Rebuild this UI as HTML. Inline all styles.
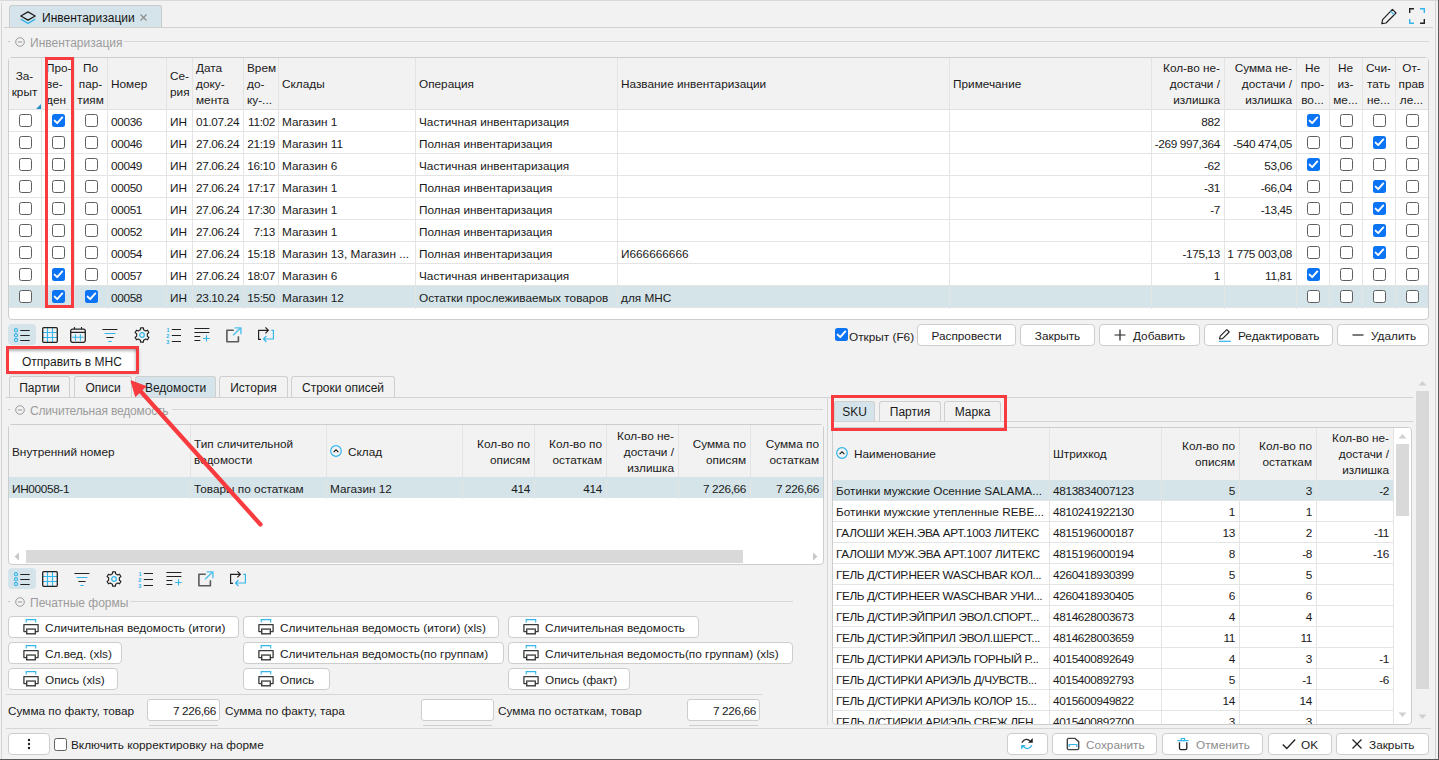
<!DOCTYPE html><html><head><meta charset="utf-8"><style>
*{box-sizing:border-box;margin:0;padding:0}
html,body{width:1439px;height:760px;overflow:hidden;background:#f2f2f2}
body{position:relative;font-family:"Liberation Sans",sans-serif;font-size:11.8px;color:#1a1a1a}
div{position:absolute}
.t{white-space:nowrap;line-height:16px;height:16px}
.n{letter-spacing:-0.35px}
.cb{width:13px;height:13px;border:1.3px solid #5f5f5f;border-radius:2.5px;background:#fff}
.cbc{width:13px;height:13px;border-radius:2.5px;background:#0a74f5}
.btn{background:#fff;border:1px solid #cdcdcd;border-radius:4px}
.hl{height:1px;background:#d6d6d6}
.vl{width:1px;background:#d6d6d6}
.grp{color:#9c9c9c}
svg{position:absolute;overflow:visible}
</style></head><body><div style="left:0px;top:0px;width:1439px;height:1px;background:#d9d9d9"></div>
<div style="left:1px;top:3px;width:1px;height:757px;background:#d4d4d4"></div>
<div style="left:1435px;top:0px;width:1px;height:760px;background:#d4d4d4"></div>
<div style="left:1438px;top:0px;width:1px;height:760px;background:#5a5a5a"></div>
<div style="left:0px;top:759px;width:1439px;height:1px;background:#5a5a5a"></div>
<div style="left:9px;top:5px;width:153px;height:22px;background:#d5e4ea;border:1px solid #c8cccd;border-bottom:none;border-radius:3px 3px 0 0"></div>
<svg style="left:20px;top:10.5px" width="16" height="14" viewBox="0 0 16 14"><path d="M8 0.9 L15.2 5 L8 9.1 L0.8 5 Z" fill="none" stroke="#1e1e1e" stroke-width="1.3" stroke-linejoin="round"/><path d="M1.2 8.4 L8 12.4 L14.8 8.4" fill="none" stroke="#33b5ea" stroke-width="1.3" stroke-linejoin="round" stroke-linecap="round"/></svg>
<div class="t" style="left:42px;top:10px;font-size:12px;color:#141414">Инвентаризации</div>
<svg style="left:139.5px;top:14px" width="7" height="7" viewBox="0 0 7 7"><path d="M0.5 0.5 L6.5 6.5 M6.5 0.5 L0.5 6.5" stroke="#8a8a8a" stroke-width="1.1"/></svg>
<div style="left:4px;top:27px;width:1429px;height:1px;background:#d2d2d2"></div>
<svg style="left:1380px;top:7px" width="18" height="18" viewBox="0 0 18 18"><path d="M1.8 16.6 L2.6 12.6 L12.4 2.4 L16 6 L6 16 Z" fill="none" stroke="#222" stroke-width="1.2" stroke-linejoin="round"/><path d="M10.6 4.2 L14.2 7.8" stroke="#33b5ea" stroke-width="1.2"/></svg>
<svg style="left:1409px;top:8px" width="16" height="16" viewBox="0 0 16 16"><path d="M0.7 5 V0.7 H5" fill="none" stroke="#222" stroke-width="1.4"/><path d="M11 0.7 H15.3 V5" fill="none" stroke="#33b5ea" stroke-width="1.4"/><path d="M0.7 11 V15.3 H5" fill="none" stroke="#33b5ea" stroke-width="1.4"/><path d="M11 15.3 H15.3 V11" fill="none" stroke="#222" stroke-width="1.4"/></svg>
<div style="left:8px;top:41px;width:2px;height:1px;background:#c8c8c8"></div>
<svg style="left:15px;top:36.5px" width="10" height="10" viewBox="0 0 10 10"><circle cx="5" cy="5" r="4.3" fill="none" stroke="#9a9a9a" stroke-width="1"/><path d="M2.8 5 H7.2" stroke="#9a9a9a" stroke-width="1"/></svg>
<div class="t grp" style="left:30px;top:35px;font-size:12px">Инвентаризация</div>
<div style="left:124px;top:41px;width:1305px;height:1px;background:#d6d6d6"></div>
<div style="left:8px;top:57px;width:1421px;height:263px;background:#fff;border:1px solid #cdcdcd;border-radius:4px;overflow:hidden"></div>
<div style="left:9px;top:58px;width:1419px;height:52px;background:#f2f2f2"></div>
<div style="left:9px;top:109px;width:1419px;height:1px;background:#e0e0e0"></div>
<div style="left:9px;top:131px;width:1419px;height:1px;background:#e4e4e4"></div>
<div class="cb" style="left:19.0px;top:114px;width:13px;height:13px;"></div>
<div class="cbc" style="left:52.0px;top:114px;width:13px;height:13px;"><svg width="13" height="13" viewBox="0 0 13 13" style="left:0;top:0"><path d="M2.6 6.6 L5.2 9.2 L10.3 3.4" fill="none" stroke="#fff" stroke-width="1.9" stroke-linecap="round" stroke-linejoin="round"/></svg></div>
<div class="cb" style="left:85.0px;top:114px;width:13px;height:13px;"></div>
<div class="t n" style="left:111px;top:114px;">00036</div>
<div class="t" style="left:170px;top:114px;">ИН</div>
<div class="t n" style="left:196px;top:114px;">01.07.24</div>
<div class="t n" style="right:1164px;top:114px;">11:02</div>
<div class="t" style="left:282px;top:114px;">Магазин 1</div>
<div class="t" style="left:419px;top:114px;">Частичная инвентаризация</div>
<div class="t" style="left:621px;top:114px;"></div>
<div class="t n" style="right:219px;top:114px;">882</div>
<div class="t n" style="right:147px;top:114px;"></div>
<div class="cbc" style="left:1307.0px;top:114px;width:13px;height:13px;"><svg width="13" height="13" viewBox="0 0 13 13" style="left:0;top:0"><path d="M2.6 6.6 L5.2 9.2 L10.3 3.4" fill="none" stroke="#fff" stroke-width="1.9" stroke-linecap="round" stroke-linejoin="round"/></svg></div>
<div class="cb" style="left:1340.0px;top:114px;width:13px;height:13px;"></div>
<div class="cb" style="left:1373.0px;top:114px;width:13px;height:13px;"></div>
<div class="cb" style="left:1406.0px;top:114px;width:13px;height:13px;"></div>
<div style="left:9px;top:153px;width:1419px;height:1px;background:#e4e4e4"></div>
<div class="cb" style="left:19.0px;top:136px;width:13px;height:13px;"></div>
<div class="cb" style="left:52.0px;top:136px;width:13px;height:13px;"></div>
<div class="cb" style="left:85.0px;top:136px;width:13px;height:13px;"></div>
<div class="t n" style="left:111px;top:136px;">00046</div>
<div class="t" style="left:170px;top:136px;">ИН</div>
<div class="t n" style="left:196px;top:136px;">27.06.24</div>
<div class="t n" style="right:1164px;top:136px;">21:19</div>
<div class="t" style="left:282px;top:136px;">Магазин 11</div>
<div class="t" style="left:419px;top:136px;">Полная инвентаризация</div>
<div class="t" style="left:621px;top:136px;"></div>
<div class="t n" style="right:219px;top:136px;">-269 997,364</div>
<div class="t n" style="right:147px;top:136px;">-540 474,05</div>
<div class="cb" style="left:1307.0px;top:136px;width:13px;height:13px;"></div>
<div class="cb" style="left:1340.0px;top:136px;width:13px;height:13px;"></div>
<div class="cbc" style="left:1373.0px;top:136px;width:13px;height:13px;"><svg width="13" height="13" viewBox="0 0 13 13" style="left:0;top:0"><path d="M2.6 6.6 L5.2 9.2 L10.3 3.4" fill="none" stroke="#fff" stroke-width="1.9" stroke-linecap="round" stroke-linejoin="round"/></svg></div>
<div class="cb" style="left:1406.0px;top:136px;width:13px;height:13px;"></div>
<div style="left:9px;top:175px;width:1419px;height:1px;background:#e4e4e4"></div>
<div class="cb" style="left:19.0px;top:158px;width:13px;height:13px;"></div>
<div class="cb" style="left:52.0px;top:158px;width:13px;height:13px;"></div>
<div class="cb" style="left:85.0px;top:158px;width:13px;height:13px;"></div>
<div class="t n" style="left:111px;top:158px;">00049</div>
<div class="t" style="left:170px;top:158px;">ИН</div>
<div class="t n" style="left:196px;top:158px;">27.06.24</div>
<div class="t n" style="right:1164px;top:158px;">16:10</div>
<div class="t" style="left:282px;top:158px;">Магазин 6</div>
<div class="t" style="left:419px;top:158px;">Частичная инвентаризация</div>
<div class="t" style="left:621px;top:158px;"></div>
<div class="t n" style="right:219px;top:158px;">-62</div>
<div class="t n" style="right:147px;top:158px;">53,06</div>
<div class="cbc" style="left:1307.0px;top:158px;width:13px;height:13px;"><svg width="13" height="13" viewBox="0 0 13 13" style="left:0;top:0"><path d="M2.6 6.6 L5.2 9.2 L10.3 3.4" fill="none" stroke="#fff" stroke-width="1.9" stroke-linecap="round" stroke-linejoin="round"/></svg></div>
<div class="cb" style="left:1340.0px;top:158px;width:13px;height:13px;"></div>
<div class="cb" style="left:1373.0px;top:158px;width:13px;height:13px;"></div>
<div class="cb" style="left:1406.0px;top:158px;width:13px;height:13px;"></div>
<div style="left:9px;top:197px;width:1419px;height:1px;background:#e4e4e4"></div>
<div class="cb" style="left:19.0px;top:180px;width:13px;height:13px;"></div>
<div class="cb" style="left:52.0px;top:180px;width:13px;height:13px;"></div>
<div class="cb" style="left:85.0px;top:180px;width:13px;height:13px;"></div>
<div class="t n" style="left:111px;top:180px;">00050</div>
<div class="t" style="left:170px;top:180px;">ИН</div>
<div class="t n" style="left:196px;top:180px;">27.06.24</div>
<div class="t n" style="right:1164px;top:180px;">17:17</div>
<div class="t" style="left:282px;top:180px;">Магазин 1</div>
<div class="t" style="left:419px;top:180px;">Полная инвентаризация</div>
<div class="t" style="left:621px;top:180px;"></div>
<div class="t n" style="right:219px;top:180px;">-31</div>
<div class="t n" style="right:147px;top:180px;">-66,04</div>
<div class="cb" style="left:1307.0px;top:180px;width:13px;height:13px;"></div>
<div class="cb" style="left:1340.0px;top:180px;width:13px;height:13px;"></div>
<div class="cbc" style="left:1373.0px;top:180px;width:13px;height:13px;"><svg width="13" height="13" viewBox="0 0 13 13" style="left:0;top:0"><path d="M2.6 6.6 L5.2 9.2 L10.3 3.4" fill="none" stroke="#fff" stroke-width="1.9" stroke-linecap="round" stroke-linejoin="round"/></svg></div>
<div class="cb" style="left:1406.0px;top:180px;width:13px;height:13px;"></div>
<div style="left:9px;top:219px;width:1419px;height:1px;background:#e4e4e4"></div>
<div class="cb" style="left:19.0px;top:202px;width:13px;height:13px;"></div>
<div class="cb" style="left:52.0px;top:202px;width:13px;height:13px;"></div>
<div class="cb" style="left:85.0px;top:202px;width:13px;height:13px;"></div>
<div class="t n" style="left:111px;top:202px;">00051</div>
<div class="t" style="left:170px;top:202px;">ИН</div>
<div class="t n" style="left:196px;top:202px;">27.06.24</div>
<div class="t n" style="right:1164px;top:202px;">17:30</div>
<div class="t" style="left:282px;top:202px;">Магазин 1</div>
<div class="t" style="left:419px;top:202px;">Полная инвентаризация</div>
<div class="t" style="left:621px;top:202px;"></div>
<div class="t n" style="right:219px;top:202px;">-7</div>
<div class="t n" style="right:147px;top:202px;">-13,45</div>
<div class="cb" style="left:1307.0px;top:202px;width:13px;height:13px;"></div>
<div class="cb" style="left:1340.0px;top:202px;width:13px;height:13px;"></div>
<div class="cbc" style="left:1373.0px;top:202px;width:13px;height:13px;"><svg width="13" height="13" viewBox="0 0 13 13" style="left:0;top:0"><path d="M2.6 6.6 L5.2 9.2 L10.3 3.4" fill="none" stroke="#fff" stroke-width="1.9" stroke-linecap="round" stroke-linejoin="round"/></svg></div>
<div class="cb" style="left:1406.0px;top:202px;width:13px;height:13px;"></div>
<div style="left:9px;top:241px;width:1419px;height:1px;background:#e4e4e4"></div>
<div class="cb" style="left:19.0px;top:224px;width:13px;height:13px;"></div>
<div class="cb" style="left:52.0px;top:224px;width:13px;height:13px;"></div>
<div class="cb" style="left:85.0px;top:224px;width:13px;height:13px;"></div>
<div class="t n" style="left:111px;top:224px;">00052</div>
<div class="t" style="left:170px;top:224px;">ИН</div>
<div class="t n" style="left:196px;top:224px;">27.06.24</div>
<div class="t n" style="right:1164px;top:224px;">7:13</div>
<div class="t" style="left:282px;top:224px;">Магазин 1</div>
<div class="t" style="left:419px;top:224px;">Полная инвентаризация</div>
<div class="t" style="left:621px;top:224px;"></div>
<div class="t n" style="right:219px;top:224px;"></div>
<div class="t n" style="right:147px;top:224px;"></div>
<div class="cb" style="left:1307.0px;top:224px;width:13px;height:13px;"></div>
<div class="cb" style="left:1340.0px;top:224px;width:13px;height:13px;"></div>
<div class="cbc" style="left:1373.0px;top:224px;width:13px;height:13px;"><svg width="13" height="13" viewBox="0 0 13 13" style="left:0;top:0"><path d="M2.6 6.6 L5.2 9.2 L10.3 3.4" fill="none" stroke="#fff" stroke-width="1.9" stroke-linecap="round" stroke-linejoin="round"/></svg></div>
<div class="cb" style="left:1406.0px;top:224px;width:13px;height:13px;"></div>
<div style="left:9px;top:263px;width:1419px;height:1px;background:#e4e4e4"></div>
<div class="cb" style="left:19.0px;top:246px;width:13px;height:13px;"></div>
<div class="cb" style="left:52.0px;top:246px;width:13px;height:13px;"></div>
<div class="cb" style="left:85.0px;top:246px;width:13px;height:13px;"></div>
<div class="t n" style="left:111px;top:246px;">00054</div>
<div class="t" style="left:170px;top:246px;">ИН</div>
<div class="t n" style="left:196px;top:246px;">27.06.24</div>
<div class="t n" style="right:1164px;top:246px;">15:18</div>
<div class="t" style="left:282px;top:246px;">Магазин 13, Магазин ...</div>
<div class="t" style="left:419px;top:246px;">Полная инвентаризация</div>
<div class="t" style="left:621px;top:246px;">И666666666</div>
<div class="t n" style="right:219px;top:246px;">-175,13</div>
<div class="t n" style="right:147px;top:246px;">1 775 003,08</div>
<div class="cb" style="left:1307.0px;top:246px;width:13px;height:13px;"></div>
<div class="cb" style="left:1340.0px;top:246px;width:13px;height:13px;"></div>
<div class="cbc" style="left:1373.0px;top:246px;width:13px;height:13px;"><svg width="13" height="13" viewBox="0 0 13 13" style="left:0;top:0"><path d="M2.6 6.6 L5.2 9.2 L10.3 3.4" fill="none" stroke="#fff" stroke-width="1.9" stroke-linecap="round" stroke-linejoin="round"/></svg></div>
<div class="cb" style="left:1406.0px;top:246px;width:13px;height:13px;"></div>
<div style="left:9px;top:285px;width:1419px;height:1px;background:#e4e4e4"></div>
<div class="cb" style="left:19.0px;top:268px;width:13px;height:13px;"></div>
<div class="cbc" style="left:52.0px;top:268px;width:13px;height:13px;"><svg width="13" height="13" viewBox="0 0 13 13" style="left:0;top:0"><path d="M2.6 6.6 L5.2 9.2 L10.3 3.4" fill="none" stroke="#fff" stroke-width="1.9" stroke-linecap="round" stroke-linejoin="round"/></svg></div>
<div class="cb" style="left:85.0px;top:268px;width:13px;height:13px;"></div>
<div class="t n" style="left:111px;top:268px;">00057</div>
<div class="t" style="left:170px;top:268px;">ИН</div>
<div class="t n" style="left:196px;top:268px;">27.06.24</div>
<div class="t n" style="right:1164px;top:268px;">18:07</div>
<div class="t" style="left:282px;top:268px;">Магазин 6</div>
<div class="t" style="left:419px;top:268px;">Частичная инвентаризация</div>
<div class="t" style="left:621px;top:268px;"></div>
<div class="t n" style="right:219px;top:268px;">1</div>
<div class="t n" style="right:147px;top:268px;">11,81</div>
<div class="cbc" style="left:1307.0px;top:268px;width:13px;height:13px;"><svg width="13" height="13" viewBox="0 0 13 13" style="left:0;top:0"><path d="M2.6 6.6 L5.2 9.2 L10.3 3.4" fill="none" stroke="#fff" stroke-width="1.9" stroke-linecap="round" stroke-linejoin="round"/></svg></div>
<div class="cb" style="left:1340.0px;top:268px;width:13px;height:13px;"></div>
<div class="cb" style="left:1373.0px;top:268px;width:13px;height:13px;"></div>
<div class="cb" style="left:1406.0px;top:268px;width:13px;height:13px;"></div>
<div style="left:9px;top:286px;width:1419px;height:22px;background:#d4e4e9"></div>
<div style="left:9px;top:307px;width:1419px;height:1px;background:#e4e4e4"></div>
<div class="cb" style="left:19.0px;top:290px;width:13px;height:13px;"></div>
<div class="cbc" style="left:52.0px;top:290px;width:13px;height:13px;"><svg width="13" height="13" viewBox="0 0 13 13" style="left:0;top:0"><path d="M2.6 6.6 L5.2 9.2 L10.3 3.4" fill="none" stroke="#fff" stroke-width="1.9" stroke-linecap="round" stroke-linejoin="round"/></svg></div>
<div class="cbc" style="left:85.0px;top:290px;width:13px;height:13px;"><svg width="13" height="13" viewBox="0 0 13 13" style="left:0;top:0"><path d="M2.6 6.6 L5.2 9.2 L10.3 3.4" fill="none" stroke="#fff" stroke-width="1.9" stroke-linecap="round" stroke-linejoin="round"/></svg></div>
<div class="t n" style="left:111px;top:290px;">00058</div>
<div class="t" style="left:170px;top:290px;">ИН</div>
<div class="t n" style="left:196px;top:290px;">23.10.24</div>
<div class="t n" style="right:1164px;top:290px;">15:50</div>
<div class="t" style="left:282px;top:290px;">Магазин 12</div>
<div class="t" style="left:419px;top:290px;">Остатки прослеживаемых товаров</div>
<div class="t" style="left:621px;top:290px;">для МНС</div>
<div class="t n" style="right:219px;top:290px;"></div>
<div class="t n" style="right:147px;top:290px;"></div>
<div class="cb" style="left:1307.0px;top:290px;width:13px;height:13px;"></div>
<div class="cb" style="left:1340.0px;top:290px;width:13px;height:13px;"></div>
<div class="cb" style="left:1373.0px;top:290px;width:13px;height:13px;"></div>
<div class="cb" style="left:1406.0px;top:290px;width:13px;height:13px;"></div>
<div style="left:41px;top:58px;width:1px;height:251px;background:#e4e4e4"></div>
<div style="left:74px;top:58px;width:1px;height:251px;background:#e4e4e4"></div>
<div style="left:107px;top:58px;width:1px;height:251px;background:#e4e4e4"></div>
<div style="left:166px;top:58px;width:1px;height:251px;background:#e4e4e4"></div>
<div style="left:192px;top:58px;width:1px;height:251px;background:#e4e4e4"></div>
<div style="left:243px;top:58px;width:1px;height:251px;background:#e4e4e4"></div>
<div style="left:278px;top:58px;width:1px;height:251px;background:#e4e4e4"></div>
<div style="left:415px;top:58px;width:1px;height:251px;background:#e4e4e4"></div>
<div style="left:617px;top:58px;width:1px;height:251px;background:#e4e4e4"></div>
<div style="left:949px;top:58px;width:1px;height:251px;background:#e4e4e4"></div>
<div style="left:1151px;top:58px;width:1px;height:251px;background:#e4e4e4"></div>
<div style="left:1224px;top:58px;width:1px;height:251px;background:#e4e4e4"></div>
<div style="left:1296px;top:58px;width:1px;height:251px;background:#e4e4e4"></div>
<div style="left:1329px;top:58px;width:1px;height:251px;background:#e4e4e4"></div>
<div style="left:1362px;top:58px;width:1px;height:251px;background:#e4e4e4"></div>
<div style="left:1395px;top:58px;width:1px;height:251px;background:#e4e4e4"></div>
<div class="t" style="left:8px;width:33px;text-align:center;top:68px">За-</div>
<div class="t" style="left:8px;width:33px;text-align:center;top:84px">крыт</div>
<div class="t" style="left:46px;top:60px;">Про-</div>
<div class="t" style="left:46px;top:76px;">ве-</div>
<div class="t" style="left:46px;top:92px;">ден</div>
<div class="t" style="left:74px;width:33px;text-align:center;top:60px">По</div>
<div class="t" style="left:74px;width:33px;text-align:center;top:76px">пар-</div>
<div class="t" style="left:74px;width:33px;text-align:center;top:92px">тиям</div>
<div class="t" style="left:111px;top:76px;">Номер</div>
<div class="t" style="left:170px;top:68px;">Се-</div>
<div class="t" style="left:170px;top:84px;">рия</div>
<div class="t" style="left:196px;top:60px;">Дата</div>
<div class="t" style="left:196px;top:76px;">доку-</div>
<div class="t" style="left:196px;top:92px;">мента</div>
<div class="t" style="left:247px;top:60px;">Врем</div>
<div class="t" style="left:247px;top:76px;">до-</div>
<div class="t" style="left:247px;top:92px;">ку-...</div>
<div class="t" style="left:282px;top:76px;">Склады</div>
<div class="t" style="left:419px;top:76px;">Операция</div>
<div class="t" style="left:621px;top:76px;">Название инвентаризации</div>
<div class="t" style="left:953px;top:76px;">Примечание</div>
<div class="t" style="right:219px;top:60px;">Кол-во не-</div>
<div class="t" style="right:219px;top:76px;">достачи /</div>
<div class="t" style="right:219px;top:92px;">излишка</div>
<div class="t" style="right:147px;top:60px;">Сумма не-</div>
<div class="t" style="right:147px;top:76px;">достачи /</div>
<div class="t" style="right:147px;top:92px;">излишка</div>
<div class="t" style="left:1296px;width:33px;text-align:center;top:60px">Не</div>
<div class="t" style="left:1296px;width:33px;text-align:center;top:76px">про-</div>
<div class="t" style="left:1296px;width:33px;text-align:center;top:92px">во...</div>
<div class="t" style="left:1329px;width:33px;text-align:center;top:60px">Не</div>
<div class="t" style="left:1329px;width:33px;text-align:center;top:76px">из-</div>
<div class="t" style="left:1329px;width:33px;text-align:center;top:92px">ме...</div>
<div class="t" style="left:1362px;width:33px;text-align:center;top:60px">Счи-</div>
<div class="t" style="left:1362px;width:33px;text-align:center;top:76px">тать</div>
<div class="t" style="left:1362px;width:33px;text-align:center;top:92px">не...</div>
<div class="t" style="left:1395px;width:33px;text-align:center;top:60px">От-</div>
<div class="t" style="left:1395px;width:33px;text-align:center;top:76px">прав</div>
<div class="t" style="left:1395px;width:33px;text-align:center;top:92px">ле...</div>
<svg style="left:36px;top:104px" width="5" height="5" viewBox="0 0 5 5"><path d="M5 0 V5 H0 Z" fill="#2a8fc8"/></svg>
<div style="left:8px;top:324px;width:28px;height:21px;background:#d5e4ea;border-radius:4px"></div>
<svg style="left:14px;top:327px" width="16" height="16" viewBox="0 0 16 16"><circle cx="2" cy="3.2" r="1.6" fill="none" stroke="#33b5ea" stroke-width="1.1"/><circle cx="2" cy="8.2" r="1.6" fill="none" stroke="#33b5ea" stroke-width="1.1"/><circle cx="2" cy="13" r="1.6" fill="none" stroke="#33b5ea" stroke-width="1.1"/><path d="M6.3 3.5 H15.7 M6.3 8.5 H15.7 M6.3 13.5 H15.7" stroke="#222" stroke-width="1.15"/></svg>
<svg style="left:42px;top:327px" width="16" height="16" viewBox="0 0 16 16"><path d="M5.5 1 V15 M10.5 1 V15 M1 5.5 H15 M1 10.5 H15" stroke="#33b5ea" stroke-width="1.1"/><rect x="0.7" y="0.7" width="14.6" height="14.6" rx="1" fill="none" stroke="#222" stroke-width="1.3"/></svg>
<svg style="left:70px;top:327px" width="16" height="16" viewBox="0 0 16 16"><rect x="0.7" y="2.2" width="14.6" height="13.1" rx="1.8" fill="none" stroke="#222" stroke-width="1.3"/><path d="M1 5.4 H15 M4.5 0 V2.3 M11.5 0 V2.3" stroke="#222" stroke-width="1.1"/><path d="M2.2 10.3 H13.6 M5.5 7.3 V13.7 M10.4 7.3 V13.7" stroke="#33b5ea" stroke-width="1.1"/></svg>
<svg style="left:102px;top:327px" width="16" height="16" viewBox="0 0 16 16"><path d="M0.4 2.5 H15.4 M4.4 10.5 H11.6" stroke="#222" stroke-width="1.1"/><path d="M2.6 6.5 H13.5 M6.3 14.5 H9.7" stroke="#33b5ea" stroke-width="1.1"/></svg>
<svg style="left:134px;top:327px" width="16" height="16" viewBox="0 0 16 16"><path d="M6.39 2.74 L6.61 0.83 L9.39 0.83 L9.61 2.74 L11.75 3.98 L13.51 3.21 L14.90 5.62 L13.36 6.76 L13.36 9.24 L14.90 10.38 L13.51 12.79 L11.75 12.02 L9.61 13.26 L9.39 15.17 L6.61 15.17 L6.39 13.26 L4.25 12.02 L2.49 12.79 L1.10 10.38 L2.64 9.24 L2.64 6.76 L1.10 5.62 L2.49 3.21 L4.25 3.98 Z" fill="none" stroke="#222" stroke-width="1.15" stroke-linejoin="round"/><circle cx="8" cy="8" r="2.3" fill="none" stroke="#33b5ea" stroke-width="1.3"/></svg>
<svg style="left:166px;top:327px" width="16" height="16" viewBox="0 0 16 16"><text x="0.6" y="5.2" font-size="5.5" font-family="Liberation Sans" font-weight="bold" fill="#33b5ea">1</text><text x="0.2" y="11" font-size="5.5" font-family="Liberation Sans" font-weight="bold" fill="#33b5ea">2</text><text x="0.2" y="16.6" font-size="5.5" font-family="Liberation Sans" font-weight="bold" fill="#33b5ea">3</text><path d="M5.8 2.5 H15 M5.8 8.5 H15 M5.8 14.5 H15" stroke="#222" stroke-width="1.15"/></svg>
<svg style="left:194px;top:327px" width="16" height="16" viewBox="0 0 16 16"><path d="M0.4 1.5 H15.4 M0.4 5.5 H15.4 M0.4 9.5 H6.3 M0.4 13.5 H6.3" stroke="#222" stroke-width="1.1"/><path d="M9.1 11.5 H15.7 M12.5 8.2 V14.6" stroke="#33b5ea" stroke-width="1.1"/></svg>
<svg style="left:226px;top:327px" width="16" height="16" viewBox="0 0 16 16"><path d="M7.8 3.3 H0.9 V14.8 H12.4 V9.2" fill="none" stroke="#5a5a5a" stroke-width="1.6" stroke-linejoin="round"/><path d="M7.1 8.25 L14.6 0.9 M8.7 0.9 H14.9 V7.3" fill="none" stroke="#4fc0ec" stroke-width="1.4"/></svg>
<svg style="left:258px;top:327px" width="16" height="16" viewBox="0 0 16 16"><path d="M3 12.3 H0.6 V3.3 H10.3 M7.4 0.4 L10.4 3.3 L7.4 6.3" fill="none" stroke="#222" stroke-width="1.15"/><path d="M13.3 3.3 H15.4 V12 H5.6 M8.4 9 L5.5 12 L8.4 15" fill="none" stroke="#33b5ea" stroke-width="1.15"/></svg>
<div class="cbc" style="left:835px;top:328px;width:13px;height:13px;"><svg width="13" height="13" viewBox="0 0 13 13" style="left:0;top:0"><path d="M2.6 6.6 L5.2 9.2 L10.3 3.4" fill="none" stroke="#fff" stroke-width="1.9" stroke-linecap="round" stroke-linejoin="round"/></svg></div>
<div class="t" style="left:849px;top:329px;">Открыт (F6)</div>
<div class="btn" style="left:917px;top:324px;width:99px;height:22px;"></div>
<div class="t" style="left:917px;width:99px;text-align:center;top:328px">Распровести</div>
<div class="btn" style="left:1020px;top:324px;width:75px;height:22px;"></div>
<div class="t" style="left:1020px;width:75px;text-align:center;top:328px">Закрыть</div>
<div class="btn" style="left:1099px;top:324px;width:101px;height:22px;"></div>
<div class="t" style="left:1133px;top:328px;">Добавить</div>
<svg style="left:1114px;top:329px" width="12" height="12" viewBox="0 0 12 12"><path d="M6 0.5 V11.5 M0.5 6 H11.5" stroke="#222" stroke-width="1.2"/></svg>
<div class="btn" style="left:1204px;top:324px;width:129px;height:22px;"></div>
<div class="t" style="left:1238px;top:328px;">Редактировать</div>
<svg style="left:1218px;top:328px" width="14" height="14" viewBox="0 0 14 14"><path d="M1.5 11 L2.2 8.2 L8.8 1.6 L11.2 4 L4.6 10.6 Z" fill="none" stroke="#222" stroke-width="1.1" stroke-linejoin="round"/><path d="M1 13.3 H13" stroke="#33b5ea" stroke-width="1.2"/></svg>
<div class="btn" style="left:1337px;top:324px;width:92px;height:22px;"></div>
<div class="t" style="left:1371px;top:328px;">Удалить</div>
<svg style="left:1352px;top:329px" width="12" height="12" viewBox="0 0 12 12"><path d="M0.5 6 H11.5" stroke="#222" stroke-width="1.2"/></svg>
<div style="left:6px;top:397px;width:821px;height:1px;background:#d2d2d2"></div>
<div style="left:9px;top:376px;width:61px;height:21px;background:#f2f2f2;border:1px solid #cfcfcf;border-bottom:none;border-radius:3px 3px 0 0"></div>
<div class="t" style="left:9px;width:61px;text-align:center;top:380px;font-size:12px">Партии</div>
<div style="left:74px;top:376px;width:58px;height:21px;background:#f2f2f2;border:1px solid #cfcfcf;border-bottom:none;border-radius:3px 3px 0 0"></div>
<div class="t" style="left:74px;width:58px;text-align:center;top:380px;font-size:12px">Описи</div>
<div style="left:135px;top:376px;width:81px;height:21px;background:#d5e4ea;border:1px solid #cfcfcf;border-bottom:none;border-radius:3px 3px 0 0"></div>
<div class="t" style="left:135px;width:81px;text-align:center;top:380px;font-size:12px">Ведомости</div>
<div style="left:219px;top:376px;width:69px;height:21px;background:#f2f2f2;border:1px solid #cfcfcf;border-bottom:none;border-radius:3px 3px 0 0"></div>
<div class="t" style="left:219px;width:69px;text-align:center;top:380px;font-size:12px">История</div>
<div style="left:291px;top:376px;width:104px;height:21px;background:#f2f2f2;border:1px solid #cfcfcf;border-bottom:none;border-radius:3px 3px 0 0"></div>
<div class="t" style="left:291px;width:104px;text-align:center;top:380px;font-size:12px">Строки описей</div>
<div style="left:8px;top:348px;width:130px;height:24px;background:#fff;box-shadow:inset 0 4px 3px -1px rgba(0,0,0,0.3), inset -4px 0 3px -1px rgba(0,0,0,0.22), 1px 2px 3px rgba(0,0,0,0.2)"></div>
<div class="t" style="left:22px;top:354px;font-size:12px">Отправить в МНС</div>
<div style="left:827px;top:397px;width:1px;height:329px;background:#d6d6d6"></div>
<div style="left:8px;top:409px;width:2px;height:1px;background:#c8c8c8"></div>
<svg style="left:15px;top:404.5px" width="10" height="10" viewBox="0 0 10 10"><circle cx="5" cy="5" r="4.3" fill="none" stroke="#9a9a9a" stroke-width="1"/><path d="M2.8 5 H7.2" stroke="#9a9a9a" stroke-width="1"/></svg>
<div class="t grp" style="left:30px;top:403px;font-size:12px;letter-spacing:-0.18px">Сличительная ведомость</div>
<div style="left:172px;top:409px;width:651px;height:1px;background:#d6d6d6"></div>
<div style="left:8px;top:424px;width:816px;height:141px;background:#fff;border:1px solid #cdcdcd;border-radius:4px;overflow:hidden"></div>
<div style="left:9px;top:425px;width:814px;height:52px;background:#f2f2f2"></div>
<div style="left:9px;top:477px;width:814px;height:21px;background:#d4e4e9"></div>
<div style="left:190px;top:425px;width:1px;height:74px;background:#e4e4e4"></div>
<div style="left:326px;top:425px;width:1px;height:74px;background:#e4e4e4"></div>
<div style="left:462px;top:425px;width:1px;height:74px;background:#e4e4e4"></div>
<div style="left:534px;top:425px;width:1px;height:74px;background:#e4e4e4"></div>
<div style="left:606px;top:425px;width:1px;height:74px;background:#e4e4e4"></div>
<div style="left:678px;top:425px;width:1px;height:74px;background:#e4e4e4"></div>
<div style="left:750px;top:425px;width:1px;height:74px;background:#e4e4e4"></div>
<div class="t" style="left:12px;top:444px;">Внутренний номер</div>
<div class="t" style="left:194px;top:436px;">Тип сличительной</div>
<div class="t" style="left:194px;top:452px;">ведомости</div>
<svg style="left:330px;top:445px" width="12" height="12" viewBox="0 0 12 12"><circle cx="6" cy="6" r="5.3" fill="none" stroke="#33b5ea" stroke-width="1.2"/><path d="M3.6 7.2 L6 4.8 L8.4 7.2" fill="none" stroke="#222" stroke-width="1.2"/></svg>
<div class="t" style="left:348px;top:444px;">Склад</div>
<div class="t" style="right:909px;top:436px;">Кол-во по</div>
<div class="t" style="right:909px;top:452px;">описям</div>
<div class="t" style="right:837px;top:436px;">Кол-во по</div>
<div class="t" style="right:837px;top:452px;">остаткам</div>
<div class="t" style="right:765px;top:428px;">Кол-во не-</div>
<div class="t" style="right:765px;top:444px;">достачи /</div>
<div class="t" style="right:765px;top:460px;">излишка</div>
<div class="t" style="right:693px;top:436px;">Сумма по</div>
<div class="t" style="right:693px;top:452px;">описям</div>
<div class="t" style="right:620px;top:436px;">Сумма по</div>
<div class="t" style="right:620px;top:452px;">остаткам</div>
<div class="t n" style="left:12px;top:481px;">ИН00058-1</div>
<div class="t" style="left:194px;top:481px;">Товары по остаткам</div>
<div class="t" style="left:330px;top:481px;">Магазин 12</div>
<div class="t n" style="right:909px;top:481px;">414</div>
<div class="t n" style="right:837px;top:481px;">414</div>
<div class="t n" style="right:693px;top:481px;">7 226,66</div>
<div class="t n" style="right:620px;top:481px;">7 226,66</div>
<div style="left:26px;top:550px;width:717px;height:13px;background:#d9d9d9"></div>
<svg style="left:14px;top:552px" width="6" height="9" viewBox="0 0 6 9"><path d="M5 0.5 V8.5 L0.5 4.5 Z" fill="#c8c8c8"/></svg>
<svg style="left:812px;top:552px" width="6" height="9" viewBox="0 0 6 9"><path d="M1 0.5 V8.5 L5.5 4.5 Z" fill="#c8c8c8"/></svg>
<div style="left:8px;top:568px;width:28px;height:21px;background:#d5e4ea;border-radius:4px"></div>
<svg style="left:14px;top:571px" width="16" height="16" viewBox="0 0 16 16"><circle cx="2" cy="3.2" r="1.6" fill="none" stroke="#33b5ea" stroke-width="1.1"/><circle cx="2" cy="8.2" r="1.6" fill="none" stroke="#33b5ea" stroke-width="1.1"/><circle cx="2" cy="13" r="1.6" fill="none" stroke="#33b5ea" stroke-width="1.1"/><path d="M6.3 3.5 H15.7 M6.3 8.5 H15.7 M6.3 13.5 H15.7" stroke="#222" stroke-width="1.15"/></svg>
<svg style="left:42px;top:571px" width="16" height="16" viewBox="0 0 16 16"><path d="M5.5 1 V15 M10.5 1 V15 M1 5.5 H15 M1 10.5 H15" stroke="#33b5ea" stroke-width="1.1"/><rect x="0.7" y="0.7" width="14.6" height="14.6" rx="1" fill="none" stroke="#222" stroke-width="1.3"/></svg>
<svg style="left:74px;top:571px" width="16" height="16" viewBox="0 0 16 16"><path d="M0.4 2.5 H15.4 M4.4 10.5 H11.6" stroke="#222" stroke-width="1.1"/><path d="M2.6 6.5 H13.5 M6.3 14.5 H9.7" stroke="#33b5ea" stroke-width="1.1"/></svg>
<svg style="left:106px;top:571px" width="16" height="16" viewBox="0 0 16 16"><path d="M6.39 2.74 L6.61 0.83 L9.39 0.83 L9.61 2.74 L11.75 3.98 L13.51 3.21 L14.90 5.62 L13.36 6.76 L13.36 9.24 L14.90 10.38 L13.51 12.79 L11.75 12.02 L9.61 13.26 L9.39 15.17 L6.61 15.17 L6.39 13.26 L4.25 12.02 L2.49 12.79 L1.10 10.38 L2.64 9.24 L2.64 6.76 L1.10 5.62 L2.49 3.21 L4.25 3.98 Z" fill="none" stroke="#222" stroke-width="1.15" stroke-linejoin="round"/><circle cx="8" cy="8" r="2.3" fill="none" stroke="#33b5ea" stroke-width="1.3"/></svg>
<svg style="left:138px;top:571px" width="16" height="16" viewBox="0 0 16 16"><text x="0.6" y="5.2" font-size="5.5" font-family="Liberation Sans" font-weight="bold" fill="#33b5ea">1</text><text x="0.2" y="11" font-size="5.5" font-family="Liberation Sans" font-weight="bold" fill="#33b5ea">2</text><text x="0.2" y="16.6" font-size="5.5" font-family="Liberation Sans" font-weight="bold" fill="#33b5ea">3</text><path d="M5.8 2.5 H15 M5.8 8.5 H15 M5.8 14.5 H15" stroke="#222" stroke-width="1.15"/></svg>
<svg style="left:166px;top:571px" width="16" height="16" viewBox="0 0 16 16"><path d="M0.4 1.5 H15.4 M0.4 5.5 H15.4 M0.4 9.5 H6.3 M0.4 13.5 H6.3" stroke="#222" stroke-width="1.1"/><path d="M9.1 11.5 H15.7 M12.5 8.2 V14.6" stroke="#33b5ea" stroke-width="1.1"/></svg>
<svg style="left:198px;top:571px" width="16" height="16" viewBox="0 0 16 16"><path d="M7.8 3.3 H0.9 V14.8 H12.4 V9.2" fill="none" stroke="#5a5a5a" stroke-width="1.6" stroke-linejoin="round"/><path d="M7.1 8.25 L14.6 0.9 M8.7 0.9 H14.9 V7.3" fill="none" stroke="#4fc0ec" stroke-width="1.4"/></svg>
<svg style="left:230px;top:571px" width="16" height="16" viewBox="0 0 16 16"><path d="M3 12.3 H0.6 V3.3 H10.3 M7.4 0.4 L10.4 3.3 L7.4 6.3" fill="none" stroke="#222" stroke-width="1.15"/><path d="M13.3 3.3 H15.4 V12 H5.6 M8.4 9 L5.5 12 L8.4 15" fill="none" stroke="#33b5ea" stroke-width="1.15"/></svg>
<div style="left:8px;top:601px;width:2px;height:1px;background:#c8c8c8"></div>
<svg style="left:15px;top:596.5px" width="10" height="10" viewBox="0 0 10 10"><circle cx="5" cy="5" r="4.3" fill="none" stroke="#9a9a9a" stroke-width="1"/><path d="M2.8 5 H7.2" stroke="#9a9a9a" stroke-width="1"/></svg>
<div class="t grp" style="left:30px;top:595px;font-size:12px">Печатные формы</div>
<div style="left:130px;top:601px;width:663px;height:1px;background:#d6d6d6"></div>
<div class="btn" style="left:8px;top:616px;width:231px;height:22px;"></div>
<svg style="left:23px;top:619px" width="16" height="16" viewBox="0 0 16 16"><path d="M3.2 3.4 V0.6 H12.7 V3.4" fill="none" stroke="#33b5ea" stroke-width="1.1"/><path d="M3.4 12.6 H0.9 V5.6 H15.1 V12.6 H12.6" fill="none" stroke="#3a3a3a" stroke-width="1.3" stroke-linejoin="round"/><rect x="3.7" y="10.2" width="8.6" height="4.6" fill="none" stroke="#3a3a3a" stroke-width="1.4"/><path d="M3.7 10.1 H12.3" stroke="#7a7a7a" stroke-width="1.4"/></svg>
<div class="t" style="left:45px;top:620px;">Сличительная ведомость (итоги)</div>
<div class="btn" style="left:243px;top:616px;width:256px;height:22px;"></div>
<svg style="left:258px;top:619px" width="16" height="16" viewBox="0 0 16 16"><path d="M3.2 3.4 V0.6 H12.7 V3.4" fill="none" stroke="#33b5ea" stroke-width="1.1"/><path d="M3.4 12.6 H0.9 V5.6 H15.1 V12.6 H12.6" fill="none" stroke="#3a3a3a" stroke-width="1.3" stroke-linejoin="round"/><rect x="3.7" y="10.2" width="8.6" height="4.6" fill="none" stroke="#3a3a3a" stroke-width="1.4"/><path d="M3.7 10.1 H12.3" stroke="#7a7a7a" stroke-width="1.4"/></svg>
<div class="t" style="left:280px;top:620px;">Сличительная ведомость (итоги) (xls)</div>
<div class="btn" style="left:508px;top:616px;width:191px;height:22px;"></div>
<svg style="left:523px;top:619px" width="16" height="16" viewBox="0 0 16 16"><path d="M3.2 3.4 V0.6 H12.7 V3.4" fill="none" stroke="#33b5ea" stroke-width="1.1"/><path d="M3.4 12.6 H0.9 V5.6 H15.1 V12.6 H12.6" fill="none" stroke="#3a3a3a" stroke-width="1.3" stroke-linejoin="round"/><rect x="3.7" y="10.2" width="8.6" height="4.6" fill="none" stroke="#3a3a3a" stroke-width="1.4"/><path d="M3.7 10.1 H12.3" stroke="#7a7a7a" stroke-width="1.4"/></svg>
<div class="t" style="left:545px;top:620px;">Сличительная ведомость</div>
<div class="btn" style="left:8px;top:642px;width:114px;height:22px;"></div>
<svg style="left:23px;top:645px" width="16" height="16" viewBox="0 0 16 16"><path d="M3.2 3.4 V0.6 H12.7 V3.4" fill="none" stroke="#33b5ea" stroke-width="1.1"/><path d="M3.4 12.6 H0.9 V5.6 H15.1 V12.6 H12.6" fill="none" stroke="#3a3a3a" stroke-width="1.3" stroke-linejoin="round"/><rect x="3.7" y="10.2" width="8.6" height="4.6" fill="none" stroke="#3a3a3a" stroke-width="1.4"/><path d="M3.7 10.1 H12.3" stroke="#7a7a7a" stroke-width="1.4"/></svg>
<div class="t" style="left:45px;top:646px;">Сл.вед. (xls)</div>
<div class="btn" style="left:243px;top:642px;width:261px;height:22px;"></div>
<svg style="left:258px;top:645px" width="16" height="16" viewBox="0 0 16 16"><path d="M3.2 3.4 V0.6 H12.7 V3.4" fill="none" stroke="#33b5ea" stroke-width="1.1"/><path d="M3.4 12.6 H0.9 V5.6 H15.1 V12.6 H12.6" fill="none" stroke="#3a3a3a" stroke-width="1.3" stroke-linejoin="round"/><rect x="3.7" y="10.2" width="8.6" height="4.6" fill="none" stroke="#3a3a3a" stroke-width="1.4"/><path d="M3.7 10.1 H12.3" stroke="#7a7a7a" stroke-width="1.4"/></svg>
<div class="t" style="left:280px;top:646px;">Сличительная ведомость(по группам)</div>
<div class="btn" style="left:508px;top:642px;width:285px;height:22px;"></div>
<svg style="left:523px;top:645px" width="16" height="16" viewBox="0 0 16 16"><path d="M3.2 3.4 V0.6 H12.7 V3.4" fill="none" stroke="#33b5ea" stroke-width="1.1"/><path d="M3.4 12.6 H0.9 V5.6 H15.1 V12.6 H12.6" fill="none" stroke="#3a3a3a" stroke-width="1.3" stroke-linejoin="round"/><rect x="3.7" y="10.2" width="8.6" height="4.6" fill="none" stroke="#3a3a3a" stroke-width="1.4"/><path d="M3.7 10.1 H12.3" stroke="#7a7a7a" stroke-width="1.4"/></svg>
<div class="t" style="left:545px;top:646px;">Сличительная ведомость(по группам) (xls)</div>
<div class="btn" style="left:8px;top:668px;width:110px;height:22px;"></div>
<svg style="left:23px;top:671px" width="16" height="16" viewBox="0 0 16 16"><path d="M3.2 3.4 V0.6 H12.7 V3.4" fill="none" stroke="#33b5ea" stroke-width="1.1"/><path d="M3.4 12.6 H0.9 V5.6 H15.1 V12.6 H12.6" fill="none" stroke="#3a3a3a" stroke-width="1.3" stroke-linejoin="round"/><rect x="3.7" y="10.2" width="8.6" height="4.6" fill="none" stroke="#3a3a3a" stroke-width="1.4"/><path d="M3.7 10.1 H12.3" stroke="#7a7a7a" stroke-width="1.4"/></svg>
<div class="t" style="left:45px;top:672px;">Опись (xls)</div>
<div class="btn" style="left:243px;top:668px;width:87px;height:22px;"></div>
<svg style="left:258px;top:671px" width="16" height="16" viewBox="0 0 16 16"><path d="M3.2 3.4 V0.6 H12.7 V3.4" fill="none" stroke="#33b5ea" stroke-width="1.1"/><path d="M3.4 12.6 H0.9 V5.6 H15.1 V12.6 H12.6" fill="none" stroke="#3a3a3a" stroke-width="1.3" stroke-linejoin="round"/><rect x="3.7" y="10.2" width="8.6" height="4.6" fill="none" stroke="#3a3a3a" stroke-width="1.4"/><path d="M3.7 10.1 H12.3" stroke="#7a7a7a" stroke-width="1.4"/></svg>
<div class="t" style="left:280px;top:672px;">Опись</div>
<div class="btn" style="left:508px;top:668px;width:122px;height:22px;"></div>
<svg style="left:523px;top:671px" width="16" height="16" viewBox="0 0 16 16"><path d="M3.2 3.4 V0.6 H12.7 V3.4" fill="none" stroke="#33b5ea" stroke-width="1.1"/><path d="M3.4 12.6 H0.9 V5.6 H15.1 V12.6 H12.6" fill="none" stroke="#3a3a3a" stroke-width="1.3" stroke-linejoin="round"/><rect x="3.7" y="10.2" width="8.6" height="4.6" fill="none" stroke="#3a3a3a" stroke-width="1.4"/><path d="M3.7 10.1 H12.3" stroke="#7a7a7a" stroke-width="1.4"/></svg>
<div class="t" style="left:545px;top:672px;">Опись (факт)</div>
<div style="left:6px;top:694px;width:756px;height:1px;background:#d6d6d6"></div>
<div class="t" style="left:8px;top:703px;">Сумма по факту, товар</div>
<div style="left:147px;top:699px;width:73px;height:22px;background:#fff;border:1px solid #cdcdcd;border-radius:3px"></div>
<div class="t n" style="right:1223px;top:703px;">7 226,66</div>
<div style="left:149px;top:725px;width:69px;height:1px;background:#d0d0d0"></div>
<div class="t" style="left:225px;top:703px;">Сумма по факту, тара</div>
<div style="left:421px;top:699px;width:73px;height:22px;background:#fff;border:1px solid #cdcdcd;border-radius:3px"></div>
<div style="left:423px;top:725px;width:69px;height:1px;background:#d0d0d0"></div>
<div class="t" style="left:498px;top:703px;">Сумма по остаткам, товар</div>
<div style="left:687px;top:699px;width:73px;height:22px;background:#fff;border:1px solid #cdcdcd;border-radius:3px"></div>
<div class="t n" style="right:683px;top:703px;">7 226,66</div>
<div style="left:689px;top:725px;width:69px;height:1px;background:#d0d0d0"></div>
<div style="left:827px;top:397px;width:586px;height:1px;background:#d2d2d2"></div>
<div style="left:834px;top:401px;width:41px;height:21px;background:#d5e4ea;border:1px solid #cfcfcf;border-bottom:none;border-radius:3px 3px 0 0"></div>
<div class="t" style="left:834px;width:41px;text-align:center;top:404px;font-size:12px">SKU</div>
<div style="left:879px;top:401px;width:62px;height:21px;background:#f2f2f2;border:1px solid #cfcfcf;border-bottom:none;border-radius:3px 3px 0 0"></div>
<div class="t" style="left:879px;width:62px;text-align:center;top:404px;font-size:12px">Партия</div>
<div style="left:944px;top:401px;width:57px;height:21px;background:#f2f2f2;border:1px solid #cfcfcf;border-bottom:none;border-radius:3px 3px 0 0"></div>
<div class="t" style="left:944px;width:57px;text-align:center;top:404px;font-size:12px">Марка</div>
<div style="left:832px;top:421px;width:581px;height:1px;background:#d2d2d2"></div>
<div style="left:832px;top:427px;width:580px;height:298px;background:#fff;border:1px solid #cdcdcd;border-radius:4px;overflow:hidden"></div>
<div style="left:833px;top:428px;width:560px;height:52px;background:#f2f2f2"></div>
<div style="left:1049px;top:428px;width:1px;height:296px;background:#e4e4e4"></div>
<div style="left:1161px;top:428px;width:1px;height:296px;background:#e4e4e4"></div>
<div style="left:1239px;top:428px;width:1px;height:296px;background:#e4e4e4"></div>
<div style="left:1316px;top:428px;width:1px;height:296px;background:#e4e4e4"></div>
<div style="left:1393px;top:428px;width:1px;height:296px;background:#e4e4e4"></div>
<svg style="left:836px;top:447px" width="12" height="12" viewBox="0 0 12 12"><circle cx="6" cy="6" r="5.3" fill="none" stroke="#33b5ea" stroke-width="1.2"/><path d="M3.6 7.2 L6 4.8 L8.4 7.2" fill="none" stroke="#222" stroke-width="1.2"/></svg>
<div class="t" style="left:854px;top:446px;">Наименование</div>
<div class="t" style="left:1053px;top:446px;">Штрихкод</div>
<div class="t" style="right:204px;top:438px;">Кол-во по</div>
<div class="t" style="right:204px;top:454px;">описям</div>
<div class="t" style="right:127px;top:438px;">Кол-во по</div>
<div class="t" style="right:127px;top:454px;">остаткам</div>
<div class="t" style="right:50px;top:430px;">Кол-во не-</div>
<div class="t" style="right:50px;top:446px;">достачи /</div>
<div class="t" style="right:50px;top:462px;">излишка</div>
<div style="left:833px;top:480px;width:560px;height:244px;overflow:hidden">
<div style="left:0;top:0px;width:560px;height:21px;background:#d4e4e9"></div>
<div style="left:0;top:20px;width:560px;height:1px;background:#e4e4e4"></div>
<div style="left:216px;top:0px;width:1px;height:21px;background:#e4e4e4"></div>
<div style="left:328px;top:0px;width:1px;height:21px;background:#e4e4e4"></div>
<div style="left:406px;top:0px;width:1px;height:21px;background:#e4e4e4"></div>
<div style="left:483px;top:0px;width:1px;height:21px;background:#e4e4e4"></div>
<div class="t" style="left:3px;top:3px;width:213px;overflow:hidden;letter-spacing:0">Ботинки мужские Осенние SALAMA...</div>
<div class="t n" style="left:220px;top:3px">4813834007123</div>
<div class="t n" style="right:158px;top:3px">5</div>
<div class="t n" style="right:81px;top:3px">3</div>
<div class="t n" style="right:4px;top:3px">-2</div>
<div style="left:0;top:41px;width:560px;height:1px;background:#e4e4e4"></div>
<div style="left:216px;top:21px;width:1px;height:21px;background:#e4e4e4"></div>
<div style="left:328px;top:21px;width:1px;height:21px;background:#e4e4e4"></div>
<div style="left:406px;top:21px;width:1px;height:21px;background:#e4e4e4"></div>
<div style="left:483px;top:21px;width:1px;height:21px;background:#e4e4e4"></div>
<div class="t" style="left:3px;top:24px;width:213px;overflow:hidden;letter-spacing:0">Ботинки мужские утепленные REBE...</div>
<div class="t n" style="left:220px;top:24px">4810241922130</div>
<div class="t n" style="right:158px;top:24px">1</div>
<div class="t n" style="right:81px;top:24px">1</div>
<div style="left:0;top:62px;width:560px;height:1px;background:#e4e4e4"></div>
<div style="left:216px;top:42px;width:1px;height:21px;background:#e4e4e4"></div>
<div style="left:328px;top:42px;width:1px;height:21px;background:#e4e4e4"></div>
<div style="left:406px;top:42px;width:1px;height:21px;background:#e4e4e4"></div>
<div style="left:483px;top:42px;width:1px;height:21px;background:#e4e4e4"></div>
<div class="t" style="left:3px;top:45px;width:213px;overflow:hidden;letter-spacing:-0.28px">ГАЛОШИ ЖЕН.ЭВА АРТ.1003 ЛИТЕКС</div>
<div class="t n" style="left:220px;top:45px">4815196000187</div>
<div class="t n" style="right:158px;top:45px">13</div>
<div class="t n" style="right:81px;top:45px">2</div>
<div class="t n" style="right:4px;top:45px">-11</div>
<div style="left:0;top:83px;width:560px;height:1px;background:#e4e4e4"></div>
<div style="left:216px;top:63px;width:1px;height:21px;background:#e4e4e4"></div>
<div style="left:328px;top:63px;width:1px;height:21px;background:#e4e4e4"></div>
<div style="left:406px;top:63px;width:1px;height:21px;background:#e4e4e4"></div>
<div style="left:483px;top:63px;width:1px;height:21px;background:#e4e4e4"></div>
<div class="t" style="left:3px;top:66px;width:213px;overflow:hidden;letter-spacing:-0.28px">ГАЛОШИ МУЖ.ЭВА АРТ.1007 ЛИТЕКС</div>
<div class="t n" style="left:220px;top:66px">4815196000194</div>
<div class="t n" style="right:158px;top:66px">8</div>
<div class="t n" style="right:81px;top:66px">-8</div>
<div class="t n" style="right:4px;top:66px">-16</div>
<div style="left:0;top:104px;width:560px;height:1px;background:#e4e4e4"></div>
<div style="left:216px;top:84px;width:1px;height:21px;background:#e4e4e4"></div>
<div style="left:328px;top:84px;width:1px;height:21px;background:#e4e4e4"></div>
<div style="left:406px;top:84px;width:1px;height:21px;background:#e4e4e4"></div>
<div style="left:483px;top:84px;width:1px;height:21px;background:#e4e4e4"></div>
<div class="t" style="left:3px;top:87px;width:213px;overflow:hidden;letter-spacing:-0.38px">ГЕЛЬ Д/СТИР.HEER WASCHBAR КОЛ...</div>
<div class="t n" style="left:220px;top:87px">4260418930399</div>
<div class="t n" style="right:158px;top:87px">5</div>
<div class="t n" style="right:81px;top:87px">5</div>
<div style="left:0;top:125px;width:560px;height:1px;background:#e4e4e4"></div>
<div style="left:216px;top:105px;width:1px;height:21px;background:#e4e4e4"></div>
<div style="left:328px;top:105px;width:1px;height:21px;background:#e4e4e4"></div>
<div style="left:406px;top:105px;width:1px;height:21px;background:#e4e4e4"></div>
<div style="left:483px;top:105px;width:1px;height:21px;background:#e4e4e4"></div>
<div class="t" style="left:3px;top:108px;width:213px;overflow:hidden;letter-spacing:-0.38px">ГЕЛЬ Д/СТИР.HEER WASCHBAR УНИ...</div>
<div class="t n" style="left:220px;top:108px">4260418930405</div>
<div class="t n" style="right:158px;top:108px">6</div>
<div class="t n" style="right:81px;top:108px">6</div>
<div style="left:0;top:146px;width:560px;height:1px;background:#e4e4e4"></div>
<div style="left:216px;top:126px;width:1px;height:21px;background:#e4e4e4"></div>
<div style="left:328px;top:126px;width:1px;height:21px;background:#e4e4e4"></div>
<div style="left:406px;top:126px;width:1px;height:21px;background:#e4e4e4"></div>
<div style="left:483px;top:126px;width:1px;height:21px;background:#e4e4e4"></div>
<div class="t" style="left:3px;top:129px;width:213px;overflow:hidden;letter-spacing:-0.38px">ГЕЛЬ Д/СТИР.ЭЙПРИЛ ЭВОЛ.СПОРТ...</div>
<div class="t n" style="left:220px;top:129px">4814628003673</div>
<div class="t n" style="right:158px;top:129px">4</div>
<div class="t n" style="right:81px;top:129px">4</div>
<div style="left:0;top:167px;width:560px;height:1px;background:#e4e4e4"></div>
<div style="left:216px;top:147px;width:1px;height:21px;background:#e4e4e4"></div>
<div style="left:328px;top:147px;width:1px;height:21px;background:#e4e4e4"></div>
<div style="left:406px;top:147px;width:1px;height:21px;background:#e4e4e4"></div>
<div style="left:483px;top:147px;width:1px;height:21px;background:#e4e4e4"></div>
<div class="t" style="left:3px;top:150px;width:213px;overflow:hidden;letter-spacing:-0.38px">ГЕЛЬ Д/СТИР.ЭЙПРИЛ ЭВОЛ.ШЕРСТ...</div>
<div class="t n" style="left:220px;top:150px">4814628003659</div>
<div class="t n" style="right:158px;top:150px">11</div>
<div class="t n" style="right:81px;top:150px">11</div>
<div style="left:0;top:188px;width:560px;height:1px;background:#e4e4e4"></div>
<div style="left:216px;top:168px;width:1px;height:21px;background:#e4e4e4"></div>
<div style="left:328px;top:168px;width:1px;height:21px;background:#e4e4e4"></div>
<div style="left:406px;top:168px;width:1px;height:21px;background:#e4e4e4"></div>
<div style="left:483px;top:168px;width:1px;height:21px;background:#e4e4e4"></div>
<div class="t" style="left:3px;top:171px;width:213px;overflow:hidden;letter-spacing:-0.38px">ГЕЛЬ Д/СТИРКИ АРИЭЛЬ ГОРНЫЙ Р...</div>
<div class="t n" style="left:220px;top:171px">4015400892649</div>
<div class="t n" style="right:158px;top:171px">4</div>
<div class="t n" style="right:81px;top:171px">3</div>
<div class="t n" style="right:4px;top:171px">-1</div>
<div style="left:0;top:209px;width:560px;height:1px;background:#e4e4e4"></div>
<div style="left:216px;top:189px;width:1px;height:21px;background:#e4e4e4"></div>
<div style="left:328px;top:189px;width:1px;height:21px;background:#e4e4e4"></div>
<div style="left:406px;top:189px;width:1px;height:21px;background:#e4e4e4"></div>
<div style="left:483px;top:189px;width:1px;height:21px;background:#e4e4e4"></div>
<div class="t" style="left:3px;top:192px;width:213px;overflow:hidden;letter-spacing:-0.38px">ГЕЛЬ Д/СТИРКИ АРИЭЛЬ Д/ЧУВСТВ...</div>
<div class="t n" style="left:220px;top:192px">4015400892793</div>
<div class="t n" style="right:158px;top:192px">5</div>
<div class="t n" style="right:81px;top:192px">-1</div>
<div class="t n" style="right:4px;top:192px">-6</div>
<div style="left:0;top:230px;width:560px;height:1px;background:#e4e4e4"></div>
<div style="left:216px;top:210px;width:1px;height:21px;background:#e4e4e4"></div>
<div style="left:328px;top:210px;width:1px;height:21px;background:#e4e4e4"></div>
<div style="left:406px;top:210px;width:1px;height:21px;background:#e4e4e4"></div>
<div style="left:483px;top:210px;width:1px;height:21px;background:#e4e4e4"></div>
<div class="t" style="left:3px;top:213px;width:213px;overflow:hidden;letter-spacing:-0.38px">ГЕЛЬ Д/СТИРКИ АРИЭЛЬ КОЛОР 15...</div>
<div class="t n" style="left:220px;top:213px">4015600949822</div>
<div class="t n" style="right:158px;top:213px">14</div>
<div class="t n" style="right:81px;top:213px">14</div>
<div style="left:0;top:251px;width:560px;height:1px;background:#e4e4e4"></div>
<div style="left:216px;top:231px;width:1px;height:21px;background:#e4e4e4"></div>
<div style="left:328px;top:231px;width:1px;height:21px;background:#e4e4e4"></div>
<div style="left:406px;top:231px;width:1px;height:21px;background:#e4e4e4"></div>
<div style="left:483px;top:231px;width:1px;height:21px;background:#e4e4e4"></div>
<div class="t" style="left:3px;top:234px;width:213px;overflow:hidden;letter-spacing:-0.38px">ГЕЛЬ Д/СТИРКИ АРИЭЛЬ СВЕЖ.ЛЕН...</div>
<div class="t n" style="left:220px;top:234px">4015400892700</div>
<div class="t n" style="right:158px;top:234px">3</div>
<div class="t n" style="right:81px;top:234px">3</div>
</div>
<div style="left:1394px;top:428px;width:16px;height:295px;background:#fff"></div>
<div style="left:1396px;top:444px;width:13px;height:72px;background:#d9d9d9"></div>
<svg style="left:1398px;top:433px" width="9" height="6" viewBox="0 0 9 6"><path d="M0.5 5.5 H8.5 L4.5 1 Z" fill="#d0d0d0"/></svg>
<svg style="left:1398px;top:712px" width="9" height="6" viewBox="0 0 9 6"><path d="M0.5 0.5 H8.5 L4.5 5 Z" fill="#d0d0d0"/></svg>
<div style="left:1416px;top:391px;width:13px;height:298px;background:#d9d9d9"></div>
<svg style="left:1418px;top:380px" width="9" height="6" viewBox="0 0 9 6"><path d="M0.5 5.5 H8.5 L4.5 1 Z" fill="#d0d0d0"/></svg>
<svg style="left:1418px;top:714px" width="9" height="6" viewBox="0 0 9 6"><path d="M0.5 0.5 H8.5 L4.5 5 Z" fill="#d0d0d0"/></svg>
<div style="left:6px;top:728px;width:1425px;height:1px;background:#d6d6d6"></div>
<div class="btn" style="left:8px;top:733px;width:42px;height:22px;"></div>
<svg style="left:27px;top:738px" width="4" height="12" viewBox="0 0 4 12"><circle cx="2" cy="2" r="1.2" fill="#222"/><circle cx="2" cy="6" r="1.2" fill="#222"/><circle cx="2" cy="10" r="1.2" fill="#222"/></svg>
<div class="cb" style="left:54px;top:738px;width:13px;height:13px;"></div>
<div class="t" style="left:71px;top:737px;">Включить корректировку на форме</div>
<div class="btn" style="left:1007px;top:733px;width:41px;height:22px;"></div>
<svg style="left:1019px;top:736px" width="16" height="16" viewBox="0 0 16 16"><path d="M2.8 6.6 Q7 0.6 11.6 5.6" fill="none" stroke="#222" stroke-width="1.3"/><path d="M13.75 2.1 V6.75 H9.1 Z" fill="#222"/><path d="M13 9.4 Q8.6 15.4 4.6 10.4" fill="none" stroke="#33b5ea" stroke-width="1.3"/><path d="M2.1 13.6 V8.9 H6.7 Z" fill="#33b5ea"/></svg>
<div class="btn" style="left:1052px;top:733px;width:105px;height:22px;"></div>
<svg style="left:1065px;top:736px" width="16" height="16" viewBox="0 0 16 16"><path d="M3.6 2.4 H9.9 L13.7 5.6 V12.3 Q13.7 13.6 12.4 13.6 H3.6 Q2.3 13.6 2.3 12.3 V3.7 Q2.3 2.4 3.6 2.4 Z" fill="none" stroke="#444" stroke-width="1.4"/><path d="M4.2 11 V8.5 H11.8 V11" fill="none" stroke="#33b5ea" stroke-width="1.2"/></svg>
<div class="t" style="left:1086px;top:737px;color:#8c8c8c">Сохранить</div>
<div class="btn" style="left:1162px;top:733px;width:101px;height:22px;"></div>
<svg style="left:1175px;top:736px" width="16" height="16" viewBox="0 0 16 16"><path d="M2.3 4.6 H13.5" stroke="#33b5ea" stroke-width="1.2"/><rect x="6.2" y="2.5" width="3.4" height="2.1" fill="none" stroke="#33b5ea" stroke-width="1.1"/><path d="M4.5 6.3 V12.3 Q4.5 13.6 5.8 13.6 H10.5 Q11.8 13.6 11.8 12.3 V6.3" fill="none" stroke="#222" stroke-width="1.3"/></svg>
<div class="t" style="left:1196px;top:737px;color:#8c8c8c">Отменить</div>
<div class="btn" style="left:1268px;top:733px;width:64px;height:22px;"></div>
<svg style="left:1282px;top:738px" width="14" height="12" viewBox="0 0 14 12"><path d="M0.8 6.5 L4.8 10.5 L13.2 1.5" fill="none" stroke="#222" stroke-width="1.3"/></svg>
<div class="t" style="left:1301px;top:737px;color:#1c1c1c">OK</div>
<div class="btn" style="left:1336px;top:733px;width:93px;height:22px;"></div>
<svg style="left:1352px;top:739px" width="10" height="10" viewBox="0 0 10 10"><path d="M0.5 0.5 L9.5 9.5 M9.5 0.5 L0.5 9.5" stroke="#222" stroke-width="1.3"/></svg>
<div class="t" style="left:1369px;top:737px;color:#1c1c1c">Закрыть</div>
<div style="left:45px;top:57px;width:29px;height:251px;border:3px solid #f73b3f"></div>
<div style="left:6px;top:346px;width:133px;height:28px;border:3px solid #f73b3f"></div>
<div style="left:831px;top:395px;width:176px;height:36px;border:3px solid #f73b3f"></div>
<svg style="left:0;top:0" width="1439" height="760" viewBox="0 0 1439 760"><path d="M260.5 524.5 L139 389.5" stroke="#f73b3f" stroke-width="4.2" stroke-linecap="round"/><path d="M131 380.8 L135.5 396.6 L146 386.4 Z" fill="#f73b3f" stroke="#f73b3f" stroke-width="1" stroke-linejoin="round"/></svg></body></html>
